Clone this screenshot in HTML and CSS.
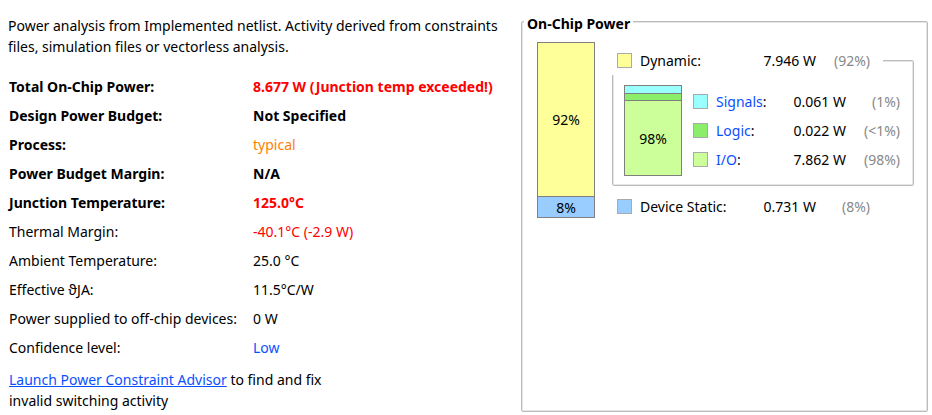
FILE: index.html
```html
<!DOCTYPE html>
<html lang="en">
<head>
<meta charset="utf-8">
<title>Power Summary</title>
<link rel="stylesheet" href="styles.css">
</head>
<body>
<main class="summary">
  <section class="details">
    <p class="intro">Power analysis from Implemented netlist. Activity derived from constraints files, simulation files or vectorless analysis.</p>
    <table class="facts">
      <tbody>
        <tr class="strong"><th scope="row">Total On-Chip Power:</th><td class="alert">8.677 W (Junction temp exceeded!)</td></tr>
        <tr class="strong"><th scope="row">Design Power Budget:</th><td>Not Specified</td></tr>
        <tr class="strong"><th scope="row">Process:</th><td class="typical">typical</td></tr>
        <tr class="strong"><th scope="row">Power Budget Margin:</th><td>N/A</td></tr>
        <tr class="strong"><th scope="row">Junction Temperature:</th><td class="alert">125.0°C</td></tr>
        <tr><th scope="row">Thermal Margin:</th><td class="alert">-40.1°C (-2.9 W)</td></tr>
        <tr><th scope="row">Ambient Temperature:</th><td>25.0 °C</td></tr>
        <tr><th scope="row">Effective ϑJA:</th><td>11.5°C/W</td></tr>
        <tr><th scope="row">Power supplied to off-chip devices:</th><td>0 W</td></tr>
        <tr><th scope="row">Confidence level:</th><td><a class="link" href="#">Low</a></td></tr>
      </tbody>
    </table>
    <p class="advice"><a class="link underlined" href="#">Launch Power Constraint Advisor</a> to find and fix<br>invalid switching activity</p>
  </section>

  <fieldset class="panel">
    <legend class="panel-title">On-Chip Power</legend>
    <div class="panel-body">
      <div class="stack total">
        <div class="part dynamic">92%</div>
        <div class="part static">8%</div>
      </div>
      <div class="breakdown">
        <fieldset class="group">
          <legend class="entry group-title">
            <span class="swatch dynamic"></span><span>Dynamic:</span><span class="watts">7.946 W</span><span class="share">(92%)</span>
          </legend>
          <div class="group-body">
            <div class="stack split">
              <div class="part signals"></div>
              <div class="part logic"></div>
              <div class="part io">98%</div>
            </div>
            <div class="entries">
              <div class="entry"><span class="swatch signals"></span><span><a class="link" href="#">Signals</a>:</span><span class="watts">0.061 W</span><span class="share">(1%)</span></div>
              <div class="entry"><span class="swatch logic"></span><span><a class="link" href="#">Logic</a>:</span><span class="watts">0.022 W</span><span class="share">(&lt;1%)</span></div>
              <div class="entry"><span class="swatch io"></span><span><a class="link" href="#">I/O</a>:</span><span class="watts">7.862 W</span><span class="share">(98%)</span></div>
            </div>
          </div>
        </fieldset>
        <div class="entry outer">
          <span class="swatch static"></span><span>Device Static:</span><span class="watts">0.731 W</span><span class="share">(8%)</span>
        </div>
      </div>
    </div>
  </fieldset>
</main>
</body>
</html>
```
FILE: styles.css
```css
* {
  box-sizing: border-box;
}

body {
  margin: 0;
  background: #fff;
  color: #000;
  font: 14px/21px "Noto Sans", "Open Sans", sans-serif;
}

.summary {
  display: grid;
  grid-template-columns: minmax(0, 1fr) 407px;
  min-height: 100vh;
  padding: 12px 4px 3px 8px;
}

.details {
  padding-top: 3px;
}

p {
  margin: 0;
}

.intro {
  max-width: 504px;
}

.facts {
  margin-top: 15px;
  border-collapse: collapse;
}

.facts th,
.facts td {
  height: 29px;
  padding: 0 1px;
  font-weight: 400;
  text-align: left;
  white-space: nowrap;
}

.facts th {
  width: 244px;
}

.facts .strong th,
.facts .strong td {
  font-weight: 700;
}

.facts .alert {
  color: #f00;
}

.facts .strong .typical {
  color: #ff7f00;
  font-weight: 400;
}

.link {
  color: #0a50ff;
  text-decoration: none;
}

.underlined {
  text-decoration: underline;
}

.advice {
  margin-top: 7px;
  padding-left: 1px;
}

fieldset {
  min-width: 0;
  margin: 0;
  padding: 0;
  border: 1px solid #bbb;
  border-radius: 2px;
  box-shadow: inset 0 0 0 1px #e6e6e6;
}

legend {
  background: #fff;
}

.panel-title {
  height: 18px;
  margin-left: 2px;
  padding: 0 3px;
  font-weight: 700;
  line-height: 24px;
}

.panel-body {
  display: flex;
  gap: 17px;
  padding: 12px 13px 0 15px;
}

.stack {
  display: flex;
  flex: none;
  flex-direction: column;
  width: 58px;
  border: 1px solid #808080;
}

.total {
  height: 176px;
}

.split {
  height: 91px;
}

.part {
  display: flex;
  align-items: center;
  justify-content: center;
}

.part + .part {
  border-top: 1px solid #808080;
}

.part.dynamic,
.part.io {
  flex: 1;
}

.part.static {
  height: 21px;
}

.part.signals,
.part.logic {
  height: 7px;
}

.dynamic {
  background: #ff9;
}

.static {
  background: #9cf;
}

.signals {
  background: #9ff;
}

.logic {
  background: #8aee6a;
}

.io {
  background: #cf9;
}

.breakdown {
  flex: 1;
  padding-top: 4px;
}

.entry {
  display: grid;
  grid-template-columns: 15px 106px 78px 54px;
  align-items: center;
  height: 29px;
  white-space: nowrap;
}

.entry > :nth-child(2) {
  padding-left: 8px;
}

.swatch {
  height: 15px;
  border: 1px solid #aaa;
}

.watts,
.share {
  text-align: right;
}

.share {
  color: #888;
}

.group-title {
  width: 271px;
  margin-left: -1px;
  padding-left: 5px;
}

.group-body {
  display: flex;
  gap: 11px;
  padding: 10px 13px 9px 11px;
}

.entries {
  flex: 1;
  padding-top: 2px;
}

.entries .entry {
  grid-template-columns: 15px 60px 78px 54px;
}

.outer {
  margin-top: 6px;
  padding-left: 5px;
}
```
